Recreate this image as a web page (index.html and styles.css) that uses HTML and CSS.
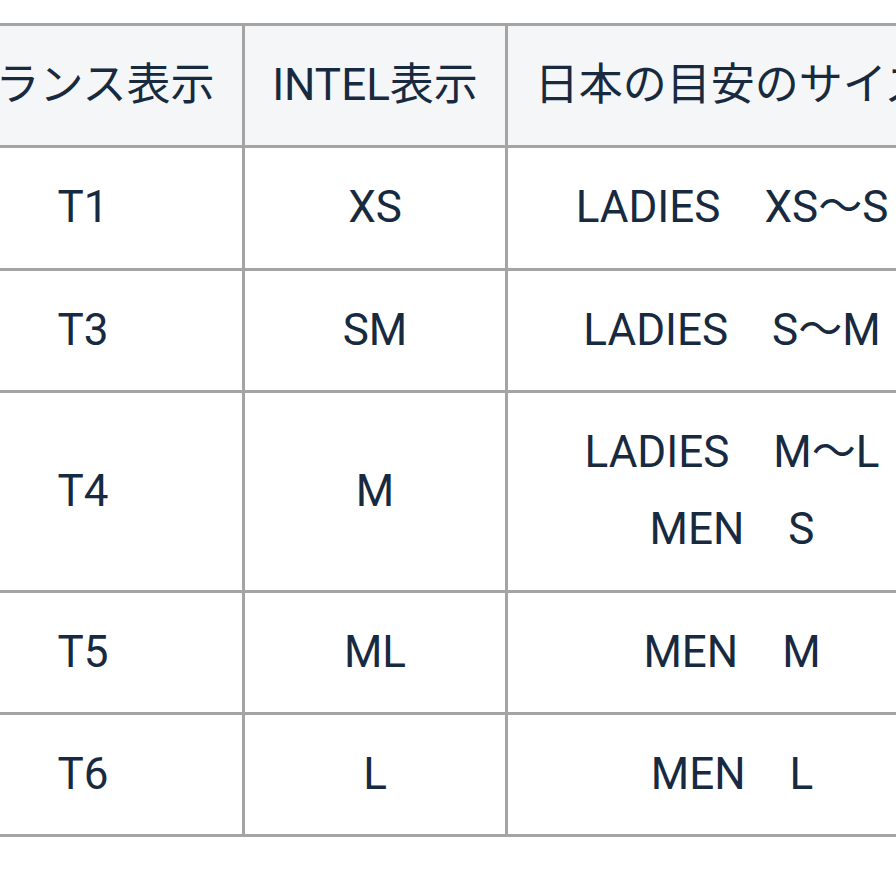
FILE: index.html
```html
<!DOCTYPE html>
<html lang="ja">
<head>
<meta charset="utf-8">
<link rel="stylesheet" href="styles.css">
</head>
<body>
<div class="wrap">
<table class="size-table">
  <colgroup>
    <col class="c1">
    <col class="c2">
    <col class="c3">
  </colgroup>
  <thead>
    <tr>
      <th>フランス表示</th>
      <th>INTEL表示</th>
      <th>日本の目安のサイズ</th>
    </tr>
  </thead>
  <tbody>
    <tr><td>T1</td><td>XS</td><td>LADIES　XS～S</td></tr>
    <tr><td>T3</td><td>SM</td><td>LADIES　S～M</td></tr>
    <tr class="tall"><td>T4</td><td>M</td><td>LADIES　M～L<br>MEN　S</td></tr>
    <tr><td>T5</td><td>ML</td><td>MEN　M</td></tr>
    <tr><td>T6</td><td>L</td><td>MEN　L</td></tr>
  </tbody>
</table>
</div>
</body>
</html>
```
FILE: styles.css
```css
html, body {
  margin: 0;
  padding: 0;
  background: #ffffff;
}
.wrap {
  width: 896px;
  height: 896px;
  overflow: hidden;
  padding-top: 23px;
  box-sizing: border-box;
}
.size-table {
  border-collapse: collapse;
  table-layout: fixed;
  width: 1035px;
  margin-left: -79px;
  font-family: Roboto, "Noto Sans CJK JP", sans-serif;
  font-size: 44px;
  color: #172a40;
}
.c1 { width: 321px; }
.c2 { width: 263px; }
.c3 { width: 451px; }
.size-table th,
.size-table td {
  border: 3px solid #a4a4a4;
  padding: 0;
  height: 119.3px;
  text-align: center;
  vertical-align: middle;
  font-weight: 400;
  line-height: 77px;
  white-space: nowrap;
  overflow: hidden;
}
.size-table th {
  background: #f5f6f7;
}
.size-table .tall td {
  height: 197px;
}
```
